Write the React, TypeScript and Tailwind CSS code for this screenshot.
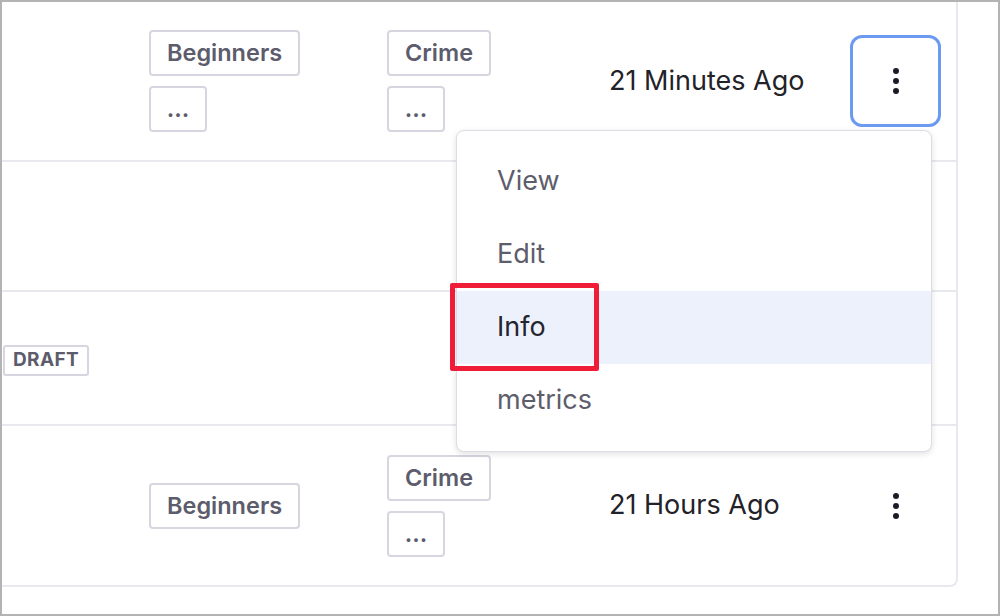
import React from 'react';

const font = { fontFamily: 'Inter, "Noto Sans", sans-serif' };

function Tag({ label, narrow }: { label: string; narrow?: boolean }) {
  return (
    <div
      className={`flex h-[46px] items-center justify-center rounded-[4px] border-2 border-[#d6d6e1] bg-white text-[23.5px] font-semibold text-[#5c5c6c] ${
        narrow ? 'w-[58px]' : 'px-[16px]'
      }`}
    >
      {label}
    </div>
  );
}

function Kebab({ active }: { active?: boolean }) {
  return (
    <div
      className={`ml-[2px] flex h-[92px] w-[91px] flex-col items-center justify-center gap-[4px] rounded-[12px] border-[3px] ${
        active ? 'border-[#6b9af0]' : 'border-transparent'
      }`}
    >
      <span className="size-[6px] rounded-full bg-[#1c1c28]" />
      <span className="size-[6px] rounded-full bg-[#1c1c28]" />
      <span className="size-[6px] rounded-full bg-[#1c1c28]" />
    </div>
  );
}

const menuItems = ['View', 'Edit', 'Info', 'metrics'];

export default function App() {
  return (
    <div
      style={font}
      className="relative h-[616px] w-[1000px] overflow-hidden border-2 border-[#b3b3b3] bg-white"
    >
      <div className="flex h-[585px] w-[956px] flex-col rounded-br-[8px] border-r-2 border-b-2 border-[#e8e8ef]">
        {/* row 1 */}
        <div className="grid h-[160px] shrink-0 grid-cols-[147px_238px_222px_239px_1fr] items-center border-b-2 border-[#e8e8ef]">
          <div />
          <div className="flex flex-col items-start gap-[10px]">
            <Tag label="Beginners" />
            <Tag label="..." narrow />
          </div>
          <div className="flex flex-col items-start gap-[10px]">
            <Tag label="Crime" />
            <Tag label="..." narrow />
          </div>
          <div className="text-[27px] text-[#222228]">21 Minutes Ago</div>
          <div>
            <Kebab active />
          </div>
        </div>
        {/* row 2 */}
        <div className="h-[130px] shrink-0 border-b-2 border-[#e8e8ef]" />
        {/* row 3 */}
        <div className="flex h-[134px] shrink-0 items-center border-b-2 border-[#e8e8ef] pt-[4px]">
          <div className="ml-px flex h-[31px] items-center rounded-[3px] border-2 border-[#d6d6e1] px-[8px] text-[19px] font-bold tracking-[0.02em] text-[#5c5c6c]">
            DRAFT
          </div>
        </div>
        {/* row 4 */}
        <div className="grid flex-1 grid-cols-[147px_238px_222px_239px_1fr] items-center">
          <div />
          <div className="flex flex-col items-start">
            <Tag label="Beginners" />
          </div>
          <div className="flex flex-col items-start gap-[10px]">
            <Tag label="Crime" />
            <Tag label="..." narrow />
          </div>
          <div className="text-[27px] text-[#222228]">21 Hours Ago</div>
          <div>
            <Kebab />
          </div>
        </div>
      </div>

      {/* dropdown menu */}
      <div className="absolute left-[454px] top-[128px] w-[476px] rounded-[8px] border border-[#dcdce5] bg-white py-[14px] shadow-[0_2px_6px_rgba(0,0,0,0.12)]">
        {menuItems.map((item) => (
          <div
            key={item}
            className={`flex h-[73px] items-center pl-[40px] text-[27px] ${
              item === 'Info' ? 'bg-[#edf1fc] text-[#25252f]' : 'text-[#5d5d6b]'
            }`}
          >
            {item}
          </div>
        ))}
      </div>

      {/* annotation */}
      <div className="absolute left-[448px] top-[281px] h-[88px] w-[149px] rounded-[2px] border-[5px] border-[#f01d38]" />
    </div>
  );
}
